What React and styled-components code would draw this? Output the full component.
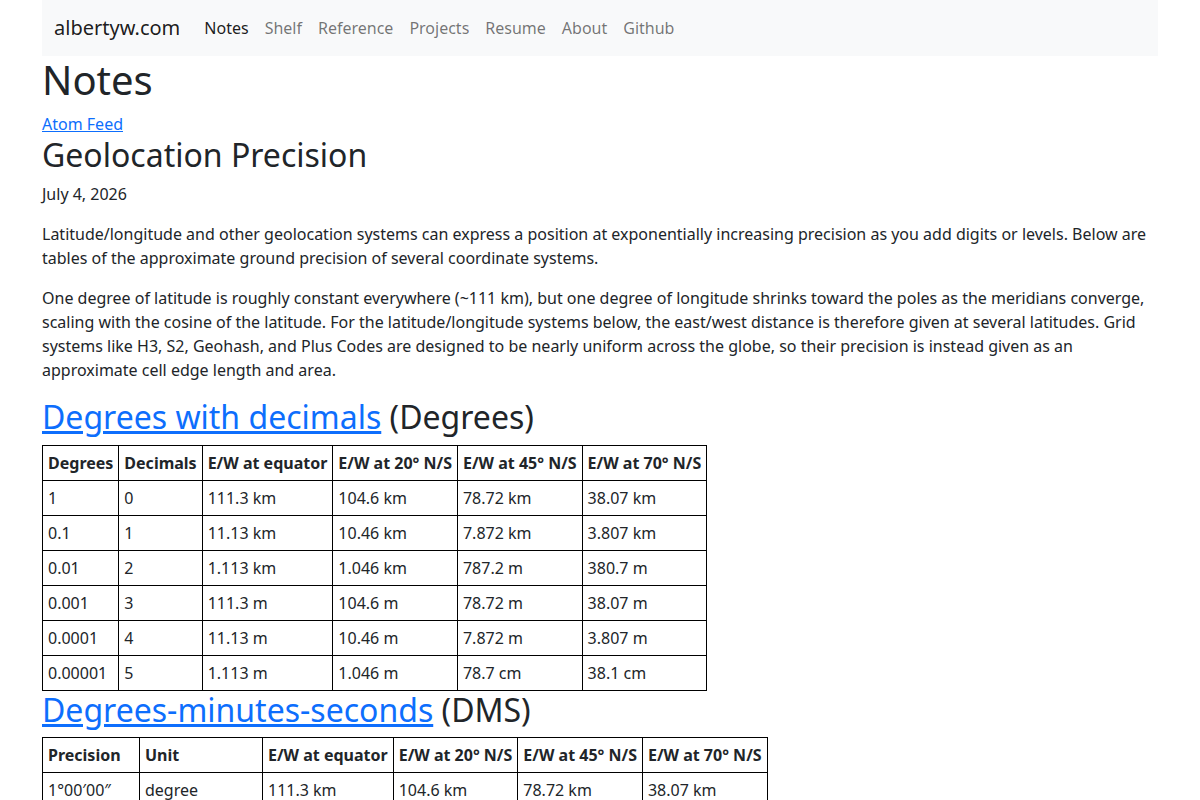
import React from 'react'
import styled, { createGlobalStyle } from 'styled-components'

const GlobalStyle = createGlobalStyle`
    *, *::before, *::after {
        box-sizing: border-box;
    }
    body {
        margin: 0;
        font-family: "Noto Sans", "Liberation Sans", sans-serif;
        font-size: 16px;
        line-height: 1.5;
        color: #212529;
        background: #fff;
    }
`

const Container = styled.div`
    max-width: 1140px;
    margin: 0 auto;
    padding: 0 12px;
`

const Navbar = styled.nav`
    display: flex;
    align-items: center;
    background-color: #f8f9fa;
    padding: 8px 12px;
`

const Brand = styled.a`
    font-size: 20px;
    line-height: 30px;
    padding: 5px 0;
    margin-right: 16px;
    color: rgba(0, 0, 0, 0.9);
    text-decoration: none;
`

const NavList = styled.div`
    display: flex;
`

const NavLink = styled.a`
    padding: 8px;
    color: ${p => (p.$active ? 'rgba(0, 0, 0, 0.9)' : 'rgba(0, 0, 0, 0.55)')};
    text-decoration: none;
`

const Title = styled.h1`
    font-size: 40px;
    font-weight: 400;
    line-height: 1.2;
    margin: 0 0 8px;
`

const Heading = styled.h2`
    font-size: 32px;
    font-weight: 400;
    line-height: 1.2;
    margin: 0 0 8px;
`

const Link = styled.a`
    color: #0d6efd;
    text-decoration: underline;
`

const Para = styled.p`
    margin: 0 0 16px;
`

const Table = styled.table`
    border-collapse: collapse;
    margin-bottom: 0;
`

const Th = styled.th`
    border: 1px solid #000;
    padding: 5px;
    text-align: left;
    font-weight: 700;
    width: ${p => (p.$w ? `${p.$w}px` : 'auto')};
`

const Td = styled.td`
    border: 1px solid #000;
    padding: 5px;
`

const links = ['Notes', 'Shelf', 'Reference', 'Projects', 'Resume', 'About', 'Github']

const latHead = ['E/W at equator', 'E/W at 20° N/S', 'E/W at 45° N/S', 'E/W at 70° N/S']

const decimals = [
    ['1', '0', '111.3 km', '104.6 km', '78.72 km', '38.07 km'],
    ['0.1', '1', '11.13 km', '10.46 km', '7.872 km', '3.807 km'],
    ['0.01', '2', '1.113 km', '1.046 km', '787.2 m', '380.7 m'],
    ['0.001', '3', '111.3 m', '104.6 m', '78.72 m', '38.07 m'],
    ['0.0001', '4', '11.13 m', '10.46 m', '7.872 m', '3.807 m'],
    ['0.00001', '5', '1.113 m', '1.046 m', '78.7 cm', '38.1 cm'],
]

const dms = [
    ['1°00′00″', 'degree', '111.3 km', '104.6 km', '78.72 km', '38.07 km'],
    ['0°01′00″', 'minute', '1.855 km', '1.743 km', '1.312 km', '634.5 m'],
    ['0°00′01″', 'second', '30.92 m', '29.06 m', '21.87 m', '10.58 m'],
    ['0°00′00.1″', 'tenth second', '3.092 m', '2.906 m', '2.187 m', '1.058 m'],
    ['0°00′00.01″', 'hundredth second', '30.9 cm', '29.1 cm', '21.9 cm', '10.6 cm'],
]

const DataTable = ({ head, rows, widths = [] }) => (
    <Table>
        <thead>
            <tr>
                {head.map((h, i) => <Th key={h} $w={widths[i]}>{h}</Th>)}
            </tr>
        </thead>
        <tbody>
            {rows.map((r, i) => (
                <tr key={i}>
                    {r.map((c, j) => <Td key={j}>{c}</Td>)}
                </tr>
            ))}
        </tbody>
    </Table>
)

const App = () => (
    <>
        <GlobalStyle />
        <Container>
            <Navbar>
                <Brand href="#">albertyw.com</Brand>
                <NavList>
                    {links.map(l => (
                        <NavLink key={l} href="#" $active={l === 'Notes'}>{l}</NavLink>
                    ))}
                </NavList>
            </Navbar>
            <Title>Notes</Title>
            <Link href="#">Atom Feed</Link>
            <Heading>Geolocation Precision</Heading>
            <Para>July 4, 2026</Para>
            <Para>
                Latitude/longitude and other geolocation systems can express a position at exponentially increasing precision as you add digits or levels. Below are tables of the approximate ground precision of several coordinate systems.
            </Para>
            <Para>
                One degree of latitude is roughly constant everywhere (~111 km), but one degree of longitude shrinks toward the poles as the meridians converge, scaling with the cosine of the latitude. For the latitude/longitude systems below, the east/west distance is therefore given at several latitudes. Grid systems like H3, S2, Geohash, and Plus Codes are designed to be nearly uniform across the globe, so their precision is instead given as an approximate cell edge length and area.
            </Para>
            <Heading>
                <Link href="#">Degrees with decimals</Link> (Degrees)
            </Heading>
            <DataTable head={['Degrees', 'Decimals', ...latHead]} rows={decimals} />
            <Heading>
                <Link href="#">Degrees-minutes-seconds</Link> (DMS)
            </Heading>
            <DataTable
                head={['Precision', 'Unit', ...latHead]}
                rows={dms}
                widths={[97, 123]}
            />
        </Container>
    </>
)

export default App
